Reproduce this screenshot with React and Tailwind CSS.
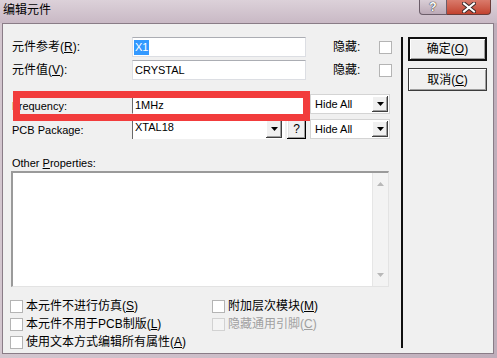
import React from "react";

const cjk = "font-['Liberation_Sans','Noto_Sans_CJK_SC',sans-serif]";

function Check({ disabled }) {
  return (
    <div
      className={
        "w-[13px] h-[13px] shrink-0 border " +
        (disabled ? "bg-[#f4f4f4] border-[#d2d2d2]" : "bg-white border-[#b4b4b4]")
      }
    />
  );
}

function Arrow() {
  return (
    <svg width="7" height="4" viewBox="0 0 7 4">
      <path d="M0 0h7L3.5 4z" fill="#000" />
    </svg>
  );
}

function DropBtn() {
  return (
    <div className="w-[16px] h-full shrink-0 bg-[#f0f0f0] flex items-center justify-center shadow-[inset_-1px_-1px_#404040,inset_1px_1px_#fff,inset_-2px_-2px_#a0a0a0]">
      <Arrow />
    </div>
  );
}

function HideAll() {
  return (
    <div className="w-[80px] h-[20px] bg-white border border-[#d4d4d4] flex items-stretch p-[1px]">
      <div className="flex-1 pl-[3px] flex items-center text-[11px] text-black">Hide All</div>
      <DropBtn />
    </div>
  );
}

export default function App() {
  return (
    <div className={"relative w-[497px] h-[358px] flex flex-col bg-gradient-to-r from-[#d3c6cf] via-[#cbbcc7] to-[#bfaebb] " + cjk}>
      {/* title bar */}
      <div className="h-[23px] flex items-start justify-between bg-gradient-to-b from-[#dcd1d9] to-[#c9b9c5]">
        <div className="pl-[3px] pt-[2px] text-[12px] leading-[16px] text-black">编辑元件</div>
        <div className="flex mr-[6px]">
          <div className="w-[28px] h-[15px] rounded-bl-[4px] border border-t-0 border-[#6b5d69] bg-gradient-to-b from-[#d9ced6] to-[#bcaab7] flex items-center justify-center text-[12px] font-bold leading-none text-white [text-shadow:0_0_1px_#222,0_0_1px_#222]">
            ?
          </div>
          <div className="w-[44px] h-[15px] rounded-br-[4px] border border-l-0 border-t-0 border-[#6b3d3a] bg-gradient-to-b from-[#d97a6b] to-[#c2422f] flex items-center justify-center">
            <svg width="14" height="11" viewBox="0 0 14 11">
              <path d="M2 1.5l10 8M12 1.5l-10 8" stroke="#3a2a2a" strokeWidth="4" strokeLinecap="square" />
              <path d="M2 1.5l10 8M12 1.5l-10 8" stroke="#fff" strokeWidth="2" strokeLinecap="square" />
            </svg>
          </div>
        </div>
      </div>

      {/* client */}
      <div className="flex-1 ml-[2px] mr-[3px] mb-[4px] border border-[#8a7c87] bg-[#f0f0f0] flex">
        {/* left column */}
        <div className="w-[398px] pt-[13px] flex flex-col text-black">
          <div className="flex items-center h-[20px] pl-[9px]">
            <div className="w-[120px] text-[12px] leading-none">
              元件参考(<u>R</u>):
            </div>
            <div className="w-[174px] h-[20px] bg-white border border-[#dcdee3] border-t-[#abadb3] flex items-center pl-[1px]">
              <span className="bg-[#3399ff] text-white text-[11px] leading-[15px] px-[1px]">X1</span>
            </div>
            <div className="w-[27px]" />
            <div className="w-[46px] text-[12px] leading-none">隐藏:</div>
            <Check />
          </div>
          <div className="flex items-center h-[20px] mt-[3px] pl-[9px]">
            <div className="w-[120px] text-[12px] leading-none">
              元件值(<u>V</u>):
            </div>
            <div className="w-[174px] h-[20px] bg-white border border-[#dcdee3] border-t-[#abadb3] flex items-center pl-[2px] text-[11px]">
              CRYSTAL
            </div>
            <div className="w-[27px]" />
            <div className="w-[46px] text-[12px] leading-none">隐藏:</div>
            <Check />
          </div>

          <div className="relative flex items-center h-[20px] mt-[14px] pl-[9px]">
            <div className="w-[120px] text-[11px] leading-none pt-[5px]">Frequency:</div>
            <div className="w-[174px] h-[20px] bg-white border-t border-l border-[#6a6a6a] border-r border-b border-r-white border-b-white flex items-start pt-[2px] pl-[2px] text-[11px]">
              1MHz
            </div>
            <div className="w-[4px]" />
            <HideAll />
            <div className="absolute left-[10px] top-[-3px] w-[297px] h-[30px] border-[7px] border-[#f23c3c]" />
          </div>

          <div className="flex items-center h-[20px] mt-[5px] pl-[9px]">
            <div className="w-[120px] text-[11px] leading-none pt-[2px]">PCB Package:</div>
            <div className="w-[153px] h-[20px] bg-white border-t border-l border-[#6a6a6a] flex items-stretch pr-[3px] pb-[1px]">
              <div className="flex-1 pl-[2px] text-[11px] leading-[14px]">XTAL18</div>
              <DropBtn />
            </div>
            <div className="w-[2px]" />
            <div className="w-[19px] h-[20px] bg-[#f0f0f0] flex items-center justify-center text-[12px] shadow-[inset_-1px_-1px_#000,inset_1px_1px_#fff,inset_-2px_-2px_#a0a0a0,inset_2px_2px_#e3e3e3]">
              ?
            </div>
            <div className="w-[4px]" />
            <HideAll />
          </div>

          <div className="mt-[17px] pl-[9px] h-[14px] text-[11px] leading-[14px]">
            Other <u>P</u>roperties:
          </div>
          <div className="ml-[8px] mt-[1px] w-[378px] h-[116px] bg-white border-t-2 border-l-2 border-t-[#9a9a9a] border-l-[#9a9a9a] border-r border-b border-r-[#e3e3e3] border-b-[#e3e3e3] flex justify-end">
            <div className="w-[16px] h-full bg-[#f3f3f3] border-l border-[#e6e6e6] flex flex-col items-center justify-between py-[9px]">
              <svg width="7" height="4" viewBox="0 0 7 4">
                <path d="M3.5 0L7 4H0z" fill="#b8b8b8" />
              </svg>
              <svg width="7" height="4" viewBox="0 0 7 4">
                <path d="M0 0h7L3.5 4z" fill="#b8b8b8" />
              </svg>
            </div>
          </div>

          <div className="mt-[10px] pl-[7px] grid grid-cols-[202px_auto] text-[12px] leading-none">
            <div className="h-[18px] flex items-center gap-[3px]">
              <Check />
              <span>
                本元件不进行仿真(<u>S</u>)
              </span>
            </div>
            <div className="h-[18px] flex items-center gap-[3px]">
              <Check />
              <span>
                附加层次模块(<u>M</u>)
              </span>
            </div>
            <div className="h-[18px] flex items-center gap-[3px]">
              <Check />
              <span>
                本元件不用于PCB制版(<u>L</u>)
              </span>
            </div>
            <div className="h-[18px] flex items-center gap-[3px] text-[#a0a0a0]">
              <Check disabled />
              <span>
                隐藏通用引脚(<u>C</u>)
              </span>
            </div>
            <div className="h-[18px] flex items-center gap-[3px]">
              <Check />
              <span>
                使用文本方式编辑所有属性(<u>A</u>)
              </span>
            </div>
          </div>
        </div>

        {/* separator */}
        <div className="w-[2px] mt-[13px] h-[311px] bg-[#111]" />

        {/* right column */}
        <div className="pl-[5px] pt-[13px] flex flex-col gap-[7px]">
          <div className="w-[79px] h-[24px] border-2 border-[#111] bg-[#f0f0f0] flex items-center justify-center text-[12px] leading-none shadow-[inset_1px_1px_#fff,inset_-1px_-1px_#a0a0a0]">
            确定(<u>O</u>)
          </div>
          <div className="w-[79px] h-[23px] border border-[#3c3c3c] bg-[#f0f0f0] flex items-center justify-center text-[12px] leading-none shadow-[inset_1px_1px_#fff,inset_-1px_-1px_#a0a0a0]">
            取消(<u>C</u>)
          </div>
        </div>
      </div>
    </div>
  );
}
